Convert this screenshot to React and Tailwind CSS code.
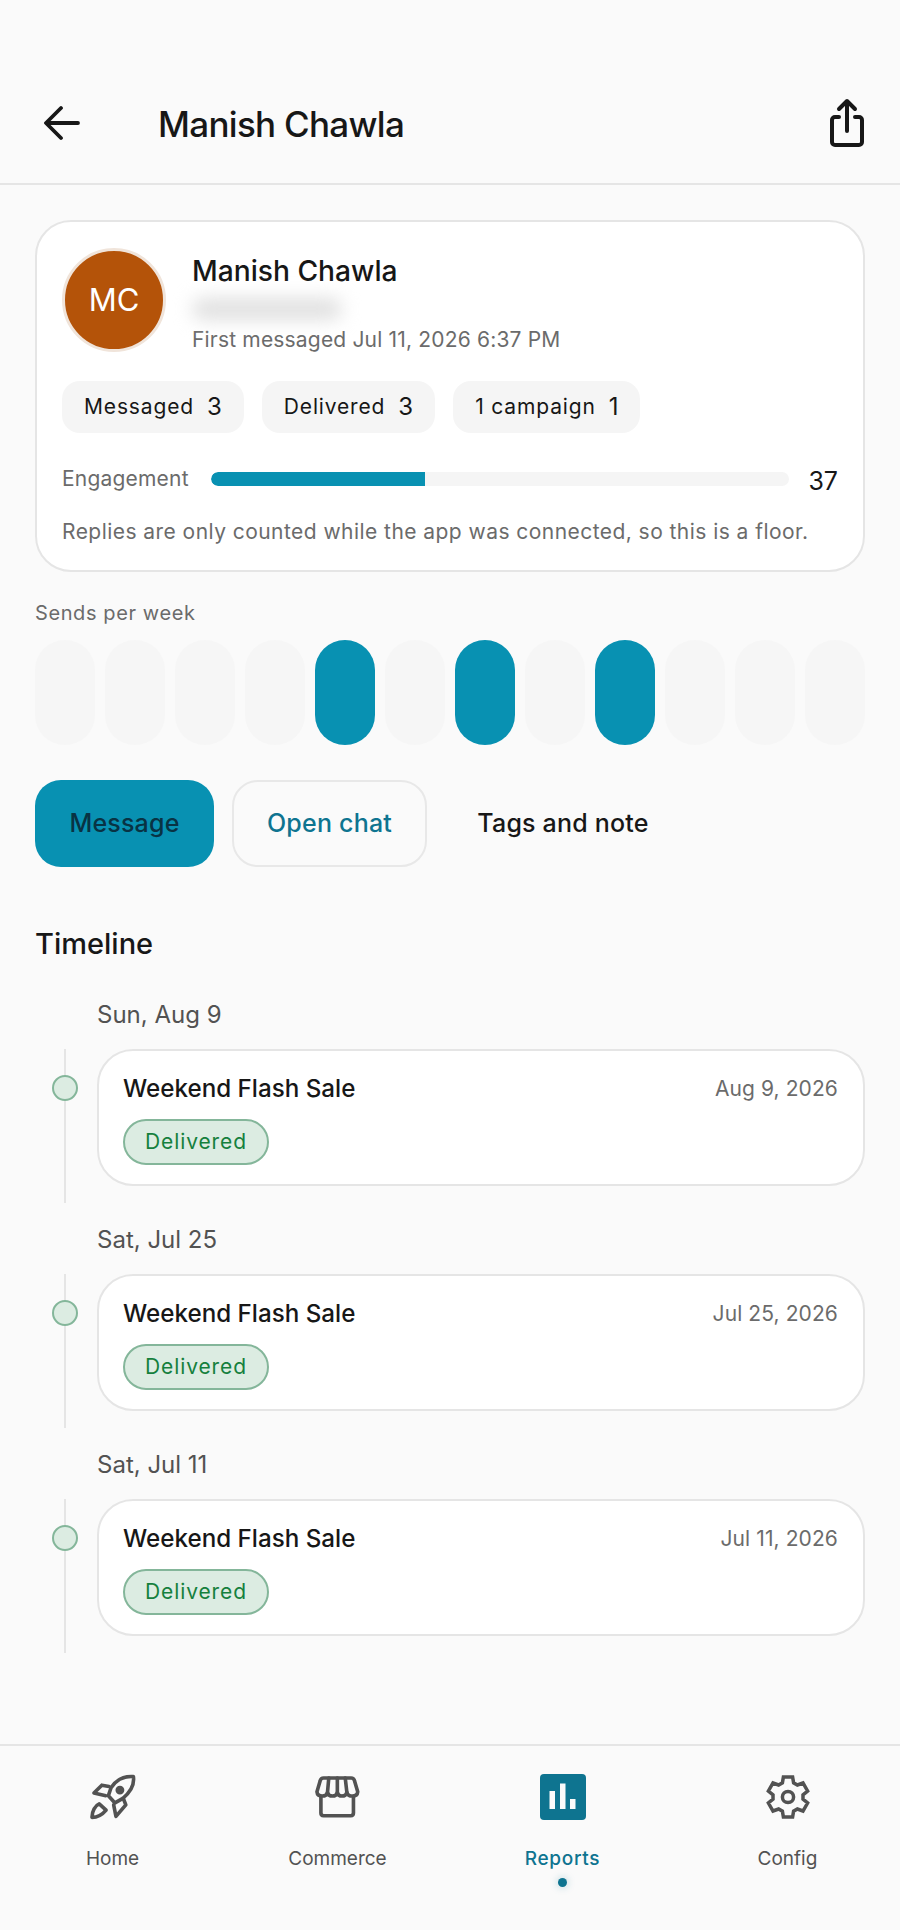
const weeks = [0, 0, 0, 0, 1, 0, 1, 0, 1, 0, 0, 0];

const events = [
  { day: 'Sun, Aug 9', date: 'Aug 9, 2026' },
  { day: 'Sat, Jul 25', date: 'Jul 25, 2026' },
  { day: 'Sat, Jul 11', date: 'Jul 11, 2026' },
];

const RocketIcon = () => (
  <svg viewBox="56 36 140 140" className="w-[46px] h-[46px]" fill="none" stroke="#525252" strokeWidth="11" strokeLinejoin="round" strokeLinecap="round">
    <path d="M188 44C160 42 135 55 120 78L112 102L132 124L156 110C178 92 192 70 188 44z" />
    <path d="M114 74L92 70L68 94L104 102" />
    <path d="M158 112L165 130L135 165L128 130" />
    <path d="M62 168C62 148 72 132 84 127L105 146C95 158 80 168 62 168z" />
    <circle cx="147" cy="85" r="8" fill="#525252" />
  </svg>
);

const StoreIcon = () => (
  <svg viewBox="74 36 140 140" className="w-[46px] h-[46px]" fill="none" stroke="#525252" strokeWidth="11" strokeLinejoin="round" strokeLinecap="round">
    <path d="M92 105V155Q92 163 100 163H183Q191 163 191 155V105" />
    <path d="M100 48H184Q192 48 194 56L204 90Q203 103 188 103Q174 103 171 92Q168 103 156 103Q145 103 142 92Q139 103 127 103Q115 103 112 92Q109 103 96 103Q81 103 80 90L90 56Q92 48 100 48z" />
    <path d="M116 48L112 92M142 48V92M166 48L171 92" />
  </svg>
);

const ReportsIcon = () => (
  <svg viewBox="0 0 46 46" className="w-[46px] h-[46px]">
    <rect width="46" height="46" rx="4" fill="#0e7490" />
    <rect x="9.5" y="17" width="5.5" height="18" fill="#fafafa" />
    <rect x="20" y="9.5" width="5.5" height="25.5" fill="#fafafa" />
    <rect x="30" y="25" width="5.5" height="10" fill="#fafafa" />
  </svg>
);

const GearIcon = () => (
  <svg viewBox="0 0 24 24" className="w-[48px] h-[48px]" fill="none" stroke="#525252" strokeWidth="1.75" strokeLinejoin="miter">
    <path d="M9.7 2h4.6l.5 2.9 1.9 1.1 2.8-1 2.3 4-2.3 1.9v2.2l2.3 1.9-2.3 4-2.8-1-1.9 1.1-.5 2.9H9.7l-.5-2.9-1.9-1.1-2.8 1-2.3-4 2.3-1.9v-2.2L2.2 9l2.3-4 2.8 1 1.9-1.1z" />
    <circle cx="12" cy="12" r="2.8" />
  </svg>
);

const navItems = [
  { label: 'Home', icon: <RocketIcon /> },
  { label: 'Commerce', icon: <StoreIcon /> },
  { label: 'Reports', icon: <ReportsIcon />, active: true },
  { label: 'Config', icon: <GearIcon /> },
];

const Stat = ({ label, value }) => (
  <div className="h-[52px] px-[22px] rounded-[18px] bg-[#f5f5f5] flex items-center gap-[13px] text-[21px] text-[#171717]">
    <span className="tracking-[0.85px]">{label}</span>
    <span className="text-[24px]">{value}</span>
  </div>
);

const App = () => {
  return (
    <div className="w-[900px] h-[1930px] bg-[#fafafa] flex flex-col overflow-hidden text-[#171717]" style={{ fontFamily: 'Inter, sans-serif' }}>
      <header className="h-[185px] pt-[88px] pl-[44px] pr-[32px] border-b-2 border-[#e5e5e5] flex items-start shrink-0">
        <svg viewBox="0 0 36 36" className="w-[36px] h-[36px] mt-[17px]" fill="none" stroke="#171717" strokeWidth="3.8" strokeLinecap="round" strokeLinejoin="round">
          <path d="M34 18H3M17 3L2 18l15 15" />
        </svg>
        <h1 className="ml-[78px] mt-[14px] text-[35px] leading-[44px] font-medium tracking-[-0.7px]">Manish Chawla</h1>
        <svg viewBox="0 0 42 52" className="ml-auto w-[42px] h-[52px] mt-[10px]" fill="none" stroke="#171717" strokeWidth="4" strokeLinecap="round" strokeLinejoin="round">
          <path d="M13 19H9a3 3 0 0 0-3 3V44a3 3 0 0 0 3 3H33a3 3 0 0 0 3-3V22a3 3 0 0 0-3-3H29" />
          <path d="M21 33V4M13 11l8-8 8 8" />
        </svg>
      </header>

      <main className="flex-1 px-[35px] pt-[35px]">
        <section className="h-[352px] rounded-[36px] border-2 border-[#e5e5e5] bg-white px-[25px] pt-[26px]">
          <div className="flex">
            <div className="w-[104px] h-[104px] rounded-full bg-[#b45309] border-[3px] border-[#f0e4da] flex items-center justify-center text-white text-[31px]">MC</div>
            <div className="ml-[26px]">
              <div className="mt-[5px] text-[28.2px] leading-[36px] font-medium">Manish Chawla</div>
              <div className="mt-[9px] w-[150px] h-[22px] rounded-full bg-[#e0e0e0] blur-[9px]"></div>
              <div className="mt-[6px] text-[21px] leading-[28px] text-[#6b6b6b] tracking-[0.18px] whitespace-nowrap">First messaged Jul 11, 2026 6:37 PM</div>
            </div>
          </div>
          <div className="mt-[27px] flex gap-[18px]">
            <Stat label="Messaged" value="3" />
            <Stat label="Delivered" value="3" />
            <Stat label="1 campaign" value="1" />
          </div>
          <div className="mt-[28px] flex items-center">
            <span className="w-[149px] text-[21px] leading-[36px] text-[#6b6b6b] tracking-[0.2px]">Engagement</span>
            <div className="w-[578px] h-[14px] rounded-full bg-[#f5f5f5] overflow-hidden">
              <div className="h-full w-[37%] rounded-l-full bg-[#0891b2]"></div>
            </div>
            <span className="ml-auto text-[25px] leading-[36px] translate-y-[2px]">37</span>
          </div>
          <p className="mt-[21px] text-[21px] leading-[28px] text-[#6b6b6b] tracking-[0.45px] whitespace-nowrap">Replies are only counted while the app was connected, so this is a floor.</p>
        </section>

        <div className="mt-[27px] text-[20px] leading-[28px] text-[#6b6b6b] tracking-[0.6px]">Sends per week</div>
        <div className="mt-[13px] flex gap-[10px]">
          {weeks.map((on, idx) => (
            <div key={idx} className={`flex-1 h-[105px] rounded-full ${on ? 'bg-[#0891b2]' : 'bg-[#f6f6f6]'}`}></div>
          ))}
        </div>

        <div className="mt-[35px] flex gap-[18px] text-[25px] tracking-[0.2px] font-medium">
          <button type="button" className="w-[179px] h-[87px] rounded-[26px] bg-[#0891b2] text-[#083344]">Message</button>
          <button type="button" className="w-[195px] h-[87px] rounded-[26px] border-2 border-[#e8e8e8] text-[#0e7490]">Open chat</button>
          <button type="button" className="w-[236px] h-[87px] text-[#171717]">Tags and note</button>
        </div>

        <h2 className="mt-[59px] text-[29px] leading-[36px] font-medium">Timeline</h2>

        <div className="mt-[37px] flex flex-col gap-[21px]">
          {events.map((ev) => (
            <div key={ev.day} className="h-[204px] flex flex-col">
              <div className="pl-[62px] text-[24px] leading-[32px] text-[#525252]">{ev.day}</div>
              <div className="mt-[18px] flex-1 relative pl-[62px]">
                <div className="absolute left-[29px] top-0 bottom-0 w-[2px] bg-[#e5e5e5]"></div>
                <div className="absolute left-[17px] top-[26px] w-[26px] h-[26px] rounded-full bg-[#dcece2] border-2 border-[#84b69a]"></div>
                <div className="h-[137px] rounded-[36px] border-2 border-[#e5e5e5] bg-white px-[24px] pt-[21px]">
                  <div className="flex items-center justify-between">
                    <span className="text-[24.2px] leading-[34px] font-medium">Weekend Flash Sale</span>
                    <span className="text-[21px] leading-[34px] text-[#6b6b6b] tracking-[0.1px] pr-[1px]">{ev.date}</span>
                  </div>
                  <span className="mt-[13px] inline-flex items-center justify-center w-[146px] h-[46px] rounded-full bg-[#dcece2] border-2 border-[#84b69a] text-[#15803d] text-[21px] tracking-[0.9px]">Delivered</span>
                </div>
              </div>
            </div>
          ))}
        </div>
      </main>

      <nav className="h-[186px] shrink-0 border-t-2 border-[#e5e5e5] grid grid-cols-4 pt-[26px]">
        {navItems.map((item) => (
          <div key={item.label} className="flex flex-col items-center">
            <div className="h-[50px] flex items-center justify-center">{item.icon}</div>
            <span className={`mt-[24px] text-[19px] leading-[26px] ${item.active ? 'text-[#0e7490] font-medium tracking-[0.7px]' : 'text-[#525252]'}`}>{item.label}</span>
            {item.active && <span className="mt-[6px] w-[9px] h-[9px] rounded-full bg-[#0e7490] shadow-[0_0_8px_#0e749055]"></span>}
          </div>
        ))}
      </nav>
    </div>
  );
};

export default App;
